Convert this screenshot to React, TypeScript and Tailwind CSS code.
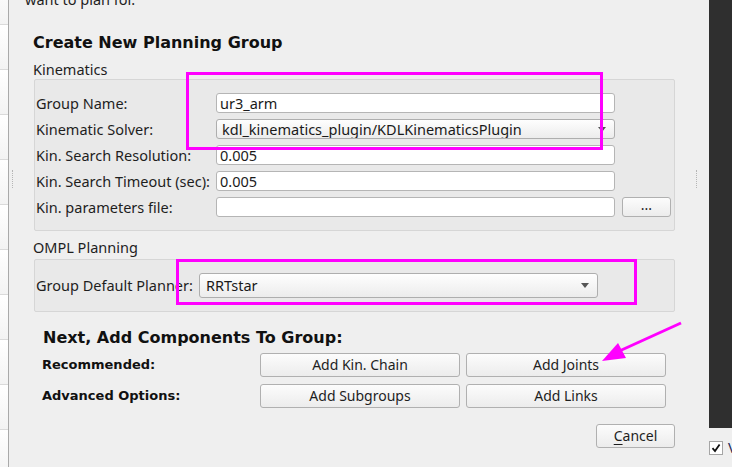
import React from 'react';

const LABEL = 'text-[14.5px] leading-[17px] text-[#1e1e1e] whitespace-nowrap';

const Field = ({ value = '' }: { value?: string }) => (
  <div className="h-[20px] bg-white border border-[#b5b5b5] rounded-[3px] px-[3px] flex items-center text-[14.5px] leading-none text-[#1a1a1a] overflow-hidden">
    {value}
  </div>
);

const Arrow = () => (
  <svg width="8" height="5" viewBox="0 0 8 5" className="shrink-0">
    <path d="M0 0H8L4 5Z" fill="#555" />
  </svg>
);

const Combo = ({ value, tall }: { value: string; tall?: boolean }) => (
  <div
    className={`${tall ? 'h-[25px] pl-[6px]' : 'h-[20px] pl-[5px]'} pr-[8px] bg-linear-to-b from-[#fefefe] to-[#ececec] border border-[#aeaeae] rounded-[3px] flex items-center justify-between text-[14.5px] leading-none text-[#1a1a1a] overflow-hidden`}
  >
    <span className="whitespace-nowrap">{value}</span>
    <Arrow />
  </div>
);

const Button = ({ children }: { children: React.ReactNode }) => (
  <button className="h-[24px] bg-linear-to-b from-[#fcfcfc] to-[#ececec] border border-[#b0b0b0] rounded-[3px] text-[14px] leading-none text-[#1e1e1e] flex items-center justify-center">
    {children}
  </button>
);

const kinematicRows = [
  { label: 'Group Name:', value: 'ur3_arm' },
  { label: 'Kinematic Solver:', value: 'kdl_kinematics_plugin/KDLKinematicsPlugin', combo: true },
  { label: 'Kin. Search Resolution:', value: '0.005' },
  { label: 'Kin. Search Timeout (sec):', value: '0.005' },
  { label: 'Kin. parameters file:', value: '', browse: true },
];

export default function App() {
  return (
    <div className="relative w-[732px] h-[467px] overflow-hidden bg-[#efefef] flex font-['Noto_Sans',sans-serif]">
      {/* left list strip */}
      <div className="w-[9px] shrink-0 border-r border-[#a9a9a9] flex flex-col -mt-[20px]">
        {Array.from({ length: 11 }).map((_, i) => (
          <div key={i} className="h-[45px] shrink-0 border-b border-[#dadada] bg-linear-to-b from-white to-[#f3f3f3]" />
        ))}
      </div>

      {/* main panel */}
      <div className="flex-1 pl-[25px] pr-[34px] flex flex-col">
        <div className={`${LABEL} -ml-[9px] -mt-[9px]`}>want to plan for.</div>

        <h1 className="mt-[25px] -ml-[1px] font-['DejaVu_Sans',sans-serif] font-bold text-[16px] leading-[19px] text-[#111]">
          Create New Planning Group
        </h1>

        <div className={`${LABEL} mt-[9px] -ml-[1px]`}>Kinematics</div>
        <div className="mt-[1px] border border-[#d6d6d6] rounded-[2px] bg-[#e9e9e9] pl-[1px] pr-[3px] py-[13px] grid grid-cols-[173px_399px_49px] gap-x-[7px] gap-y-[6px] items-center">
          {kinematicRows.map((r) => (
            <React.Fragment key={r.label}>
              <div className={LABEL}>{r.label}</div>
              {r.combo ? <Combo value={r.value} /> : <Field value={r.value} />}
              {r.browse ? (
                <button className="h-[20px] bg-linear-to-b from-[#fcfcfc] to-[#ececec] border border-[#b0b0b0] rounded-[3px] text-[14px] leading-none text-[#222] pb-[4px]">
                  ...
                </button>
              ) : (
                <div />
              )}
            </React.Fragment>
          ))}
        </div>

        <div className={`${LABEL} mt-[8px] -ml-[1px]`}>OMPL Planning</div>
        <div className="mt-[3px] border border-[#d6d6d6] rounded-[2px] bg-[#e9e9e9] pl-[1px] py-[13px] grid grid-cols-[157px_399px] gap-x-[6px] items-center">
          <div className={LABEL}>Group Default Planner:</div>
          <Combo value="RRTstar" tall />
        </div>

        <h2 className="mt-[16px] ml-[9px] font-['DejaVu_Sans',sans-serif] font-bold text-[16px] leading-[19px] text-[#111]">
          Next, Add Components To Group:
        </h2>
        <div className="mt-[6px] ml-[8px] grid grid-cols-[212px_200px_200px] gap-x-[6px] gap-y-[7px] items-center">
          <div className="font-['DejaVu_Sans',sans-serif] font-bold text-[13px] text-[#111]">Recommended:</div>
          <Button>Add Kin. Chain</Button>
          <Button>Add Joints</Button>
          <div className="font-['DejaVu_Sans',sans-serif] font-bold text-[13px] text-[#111]">Advanced Options:</div>
          <Button>Add Subgroups</Button>
          <Button>Add Links</Button>
        </div>

        <div className="mt-[16px] flex justify-end">
          <button className="w-[79px] h-[24px] bg-linear-to-b from-[#fcfcfc] to-[#ececec] border border-[#b0b0b0] rounded-[3px] text-[14px] leading-none text-[#1e1e1e]">
            <span className="underline underline-offset-[3px]">C</span>ancel
          </button>
        </div>
      </div>

      {/* right dark panel */}
      <div className="w-[24px] shrink-0 flex flex-col">
        <div className="h-[428px] bg-[#2f2f2f]" />
        <div className="mt-[11px] flex items-center gap-[5px] overflow-hidden">
          <div className="w-[14px] h-[14px] shrink-0 bg-white border border-[#a5a5a5] flex items-center justify-center">
            <svg width="10" height="10" viewBox="0 0 10 10">
              <path d="M1.5 5.2L4 8L8.6 1.5" stroke="#111" strokeWidth="1.8" fill="none" />
            </svg>
          </div>
          <span className={`${LABEL} text-[#1e2a55]`}>Visual</span>
        </div>
      </div>

      {/* splitter handles */}
      <div className="absolute left-[12px] top-[170px] h-[18px] border-l border-dotted border-[#b5b5b5]" />
      <div className="absolute left-[696px] top-[170px] h-[18px] border-l border-dotted border-[#b5b5b5]" />

      {/* annotations */}
      <div className="absolute left-[186px] top-[72px] w-[417px] h-[78px] border-[3px] border-[#ff00ff]" />
      <div className="absolute left-[176px] top-[259px] w-[461px] h-[46px] border-[3px] border-[#ff00ff]" />
      <svg className="absolute left-0 top-0 pointer-events-none" width="732" height="467">
        <line x1="681" y1="323" x2="615" y2="353" stroke="#ff00ff" strokeWidth="3" />
        <path d="M602 361L618 343L626 358Z" fill="#ff00ff" />
      </svg>
    </div>
  );
}
